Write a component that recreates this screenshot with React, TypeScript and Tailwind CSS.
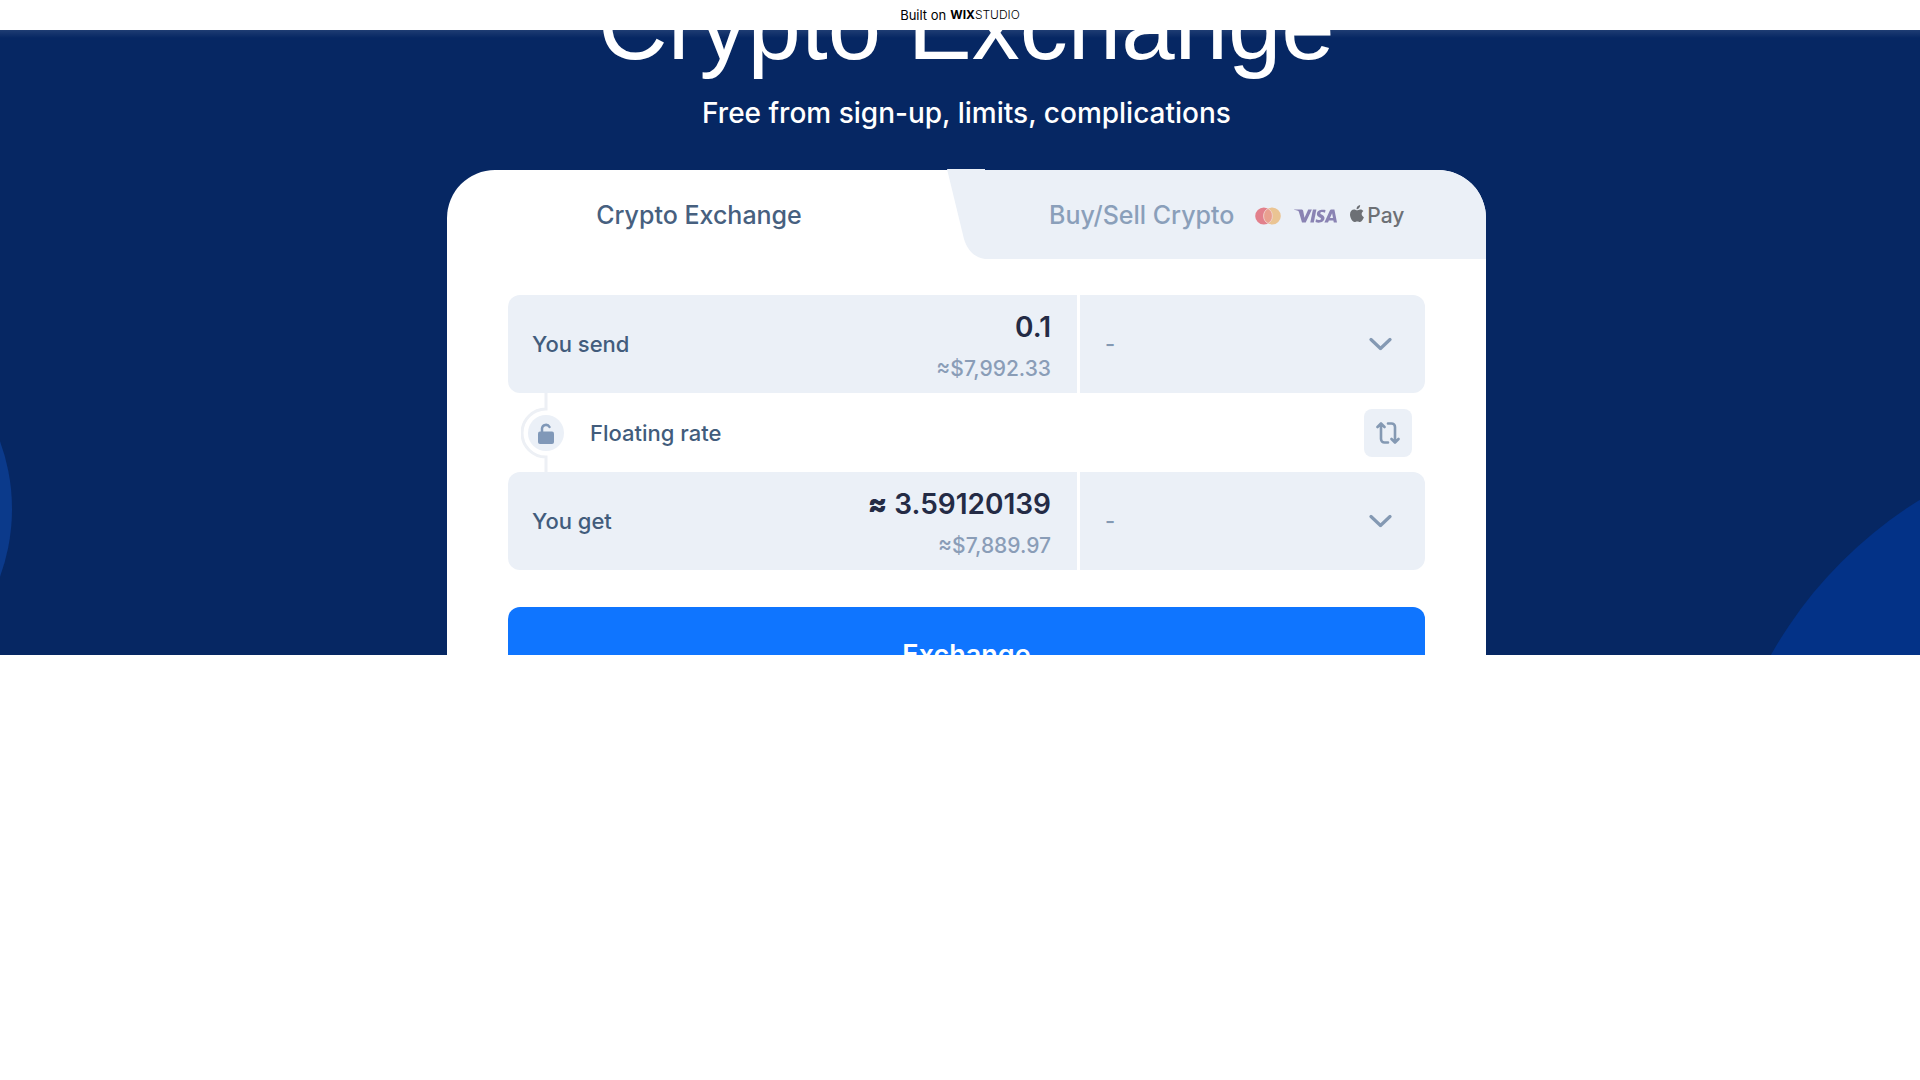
import type { ReactNode } from "react";

function Chevron() {
  return (
    <svg
      className="pointer-events-none absolute right-[33px] top-1/2 h-[13px] w-[23px] -translate-y-1/2"
      viewBox="0 0 23 13"
      fill="none"
      aria-hidden="true"
    >
      <path d="M2 2 11.5 11 21 2" stroke="#8499b3" strokeWidth="3.200" strokeLinecap="round" strokeLinejoin="round" />
    </svg>
  );
}

function MoneyRow({
  id,
  label,
  fiat,
  currencyLabel,
  children,
}: {
  id: string;
  label: string;
  fiat: string;
  currencyLabel: string;
  children: ReactNode;
}) {
  return (
    <div className="flex h-[98px] gap-[3px]">
      <div className="flex min-w-0 flex-1 items-center justify-between rounded-l-xl bg-[#ebf0f7] pl-6 pr-[26px]">
        <label htmlFor={id} className="text-[22px] font-medium leading-7 text-[#425c7c]">
          {label}
        </label>
        <div className="flex flex-col items-end gap-3 pt-1.5">
          {children}
          <span className="text-[21px] font-medium leading-7 text-[#8a9db7]">{fiat}</span>
        </div>
      </div>
      <div className="relative w-[345px] shrink-0">
        <select
          aria-label={currencyLabel}
          className="h-full w-full appearance-none rounded-r-xl bg-[#ebf0f7] px-[25px] text-[22px] font-medium text-[#8499b3]"
        >
          <option>-</option>
        </select>
        <Chevron />
      </div>
    </div>
  );
}

function PaymentLogos() {
  return (
    <span className="flex items-center gap-[13px]">
      <svg className="h-[18px] w-[26px]" viewBox="0 0 26 18" aria-label="Mastercard">
        <circle cx="17.2" cy="9" r="8.6" fill="#eac493" />
        <circle cx="8.8" cy="9" r="8.6" fill="#e2808c" />
        <path d="M13 1.5a8.6 8.6 0 0 1 0 15 8.6 8.6 0 0 1 0-15Z" fill="#e9a08f" stroke="#f3dcd8" strokeWidth="0.8" />
      </svg>
      <svg className="h-[14px] w-[43px]" viewBox="0 0 43 14" aria-label="Visa" fill="#8a83b3">
        <path d="M0 .6h7.4c1 0 1.6.5 1.8 1.5l1.3 6.6L14.200.6h3.700L11.700 13.500H8L5 3.200C4.800 2.300 4.500 2 3.800 1.700 2.800 1.300 1.500 1 0 .8Z" />
        <path d="M18.900.6h3.500l-2.600 12.900h-3.500Z" />
        <path d="M31.500 1 31 3.700c-2.200-1-4.700-.8-4.700.5 0 1.400 4.200 1.600 4.200 4.900 0 4.200-5.200 5.400-9 4l.5-2.800c2.500 1.200 5 .8 5-.6 0-1.500-4.100-1.600-4.100-4.800C22.900.8 28 .1 31.500 1Z" />
        <path fillRule="evenodd" d="M37.400.6h3L43 13.500h-3.200l-.4-2h-4.500l-.9 2h-3.600L35.700 1.700c.3-.7.900-1.100 1.700-1.100Zm.7 3.600L36 9h3Z" />
      </svg>
      <span className="flex items-center gap-[3px] text-[#6d7075]">
        <svg className="-mt-1 h-[18px] w-[14px]" viewBox="0 0 14 18" fill="currentColor" aria-label="Apple">
          <path d="M10.100 0c.1 1.200-.3 2.200-1 3-.7.800-1.600 1.300-2.500 1.200-.1-1.100.4-2.200 1-2.900C8.300.6 9.300.1 10.100 0ZM13.400 6.100c-2.500 1.600-2.200 4.900.5 6.100-.7 2-2.200 4.700-3.900 4.800-1 0-1.500-.6-2.700-.6s-1.700.6-2.700.6C2.400 17 0 12.800 0 9.500 0 6.300 2 4.500 4.100 4.500c1.200 0 2.300.8 3 .8.700 0 1.900-.9 3.300-.8 1.300 0 2.300.6 3 1.600Z" />
        </svg>
        <span className="text-[21px] leading-6">Pay</span>
      </span>
    </span>
  );
}

export default function App() {
  return (
    <div className="min-h-screen bg-white font-['Inter',sans-serif]">
      <header className="flex h-[30px] items-center justify-center bg-white text-black">
        <a href="#" className="flex items-center gap-1 text-[13px] leading-4">
          Built on
          <span className="flex items-center text-xs">
            <b className="font-bold">WIX</b>
            <span className="font-light">STUDIO</span>
          </span>
        </a>
      </header>

      <main className="relative flex h-[625px] flex-col items-center overflow-hidden bg-[#062763] pl-[13px]">
        <div className="absolute -left-[382px] top-[282px] size-[394px] rounded-full bg-[#0b3a8b]" />
        <div className="absolute -right-[654px] top-[406px] size-[858px] rounded-full bg-[#033287]" />

        <h1 className="relative -mt-[58px] whitespace-nowrap font-['Liberation_Sans',sans-serif] text-[96px] leading-[108px] text-white">
          Crypto Exchange
        </h1>
        <p className="relative mt-[13px] text-[28px] font-medium leading-10 text-white">
          Free from sign-up, limits, complications
        </p>
        <div className="absolute inset-x-0 top-0 h-2 bg-gradient-to-b from-white/10 to-transparent" />

        <section className="relative mt-[37px] w-full max-w-[1039px] rounded-t-[48px] bg-white">
          <div role="tablist" className="flex h-[89px]">
            <button
              role="tab"
              aria-selected="true"
              className="min-w-0 flex-1 rounded-tl-[48px] pl-1 pt-0.5 text-[25px] font-medium text-[#47607f]"
            >
              Crypto Exchange
            </button>
            <button
              role="tab"
              aria-selected="false"
              className="relative ml-[38px] flex w-[501px] shrink-0 items-center gap-[21px] rounded-tr-[48px] bg-[#ebf0f7] pl-[64px] pt-0.5 text-[25px] font-medium text-[#8a9fba]"
            >
              <svg className="absolute bottom-0 right-full h-[90px] w-[38px]" viewBox="0 0 38 90" fill="#ebf0f7" aria-hidden="true">
                <path d="M0 0H38V90C26 88 19 80 16 66Z" />
              </svg>
              Buy/Sell Crypto
              <PaymentLogos />
            </button>
          </div>

          <form className="px-[61px] pt-9" onSubmit={(e) => e.preventDefault()}>
            <MoneyRow id="send" label="You send" fiat="≈$7,992.33" currencyLabel="Currency you send">
              <input
                id="send"
                defaultValue="0.1"
                className="h-8 w-60 bg-transparent text-right text-[28px] font-semibold leading-8 text-[#242b45]"
              />
            </MoneyRow>

            <div className="flex h-[79px] items-center px-[13px]">
              <svg className="h-full w-12" viewBox="0 0 48 79" fill="none" aria-hidden="true">
                <path d="M25 0V16A24 24 0 0 0 25 64V79" stroke="#edf0f5" strokeWidth="3" />
                <circle cx="25" cy="40" r="18" fill="#ebf0f7" />
                <path d="M21 39V35.500a4 4 0 0 1 7.500-1.500" stroke="#8098b8" strokeWidth="2.500" strokeLinecap="round" />
                <rect x="17" y="38.500" width="16" height="12.500" rx="2" fill="#8098b8" />
              </svg>
              <span className="ml-[21px] flex-1 text-[22px] font-medium leading-7 text-[#425c7c]">Floating rate</span>
              <button
                type="button"
                aria-label="Swap currencies"
                className="flex size-12 items-center justify-center rounded-lg bg-[#ebf0f7]"
              >
                <svg
                  className="h-[22px] w-6"
                  viewBox="0 0 24 22"
                  fill="none"
                  stroke="#8499b3"
                  strokeWidth="2.600"
                  strokeLinecap="round"
                  strokeLinejoin="round"
                  aria-hidden="true"
                >
                  <path d="M1.500 5 5 1.500 8.500 5M5 2V17a3.500 3.500 0 0 0 3.500 3.500H12M12 1.500h3.500A3.500 3.500 0 0 1 19 5V20M15.500 17 19 20.500 22.500 17" />
                </svg>
              </button>
            </div>

            <MoneyRow id="get" label="You get" fiat="≈$7,889.97" currencyLabel="Currency you get">
              <output id="get" className="text-[28px] font-semibold leading-8 text-[#242b45]">
                <span className="font-black">≈</span> 3.59120139
              </output>
            </MoneyRow>

            <button
              type="submit"
              className="mt-[37px] h-[97px] w-full rounded-xl bg-[#0f75ff] text-[27px] font-semibold text-white"
            >
              Exchange
            </button>
          </form>
        </section>
      </main>
    </div>
  );
}
